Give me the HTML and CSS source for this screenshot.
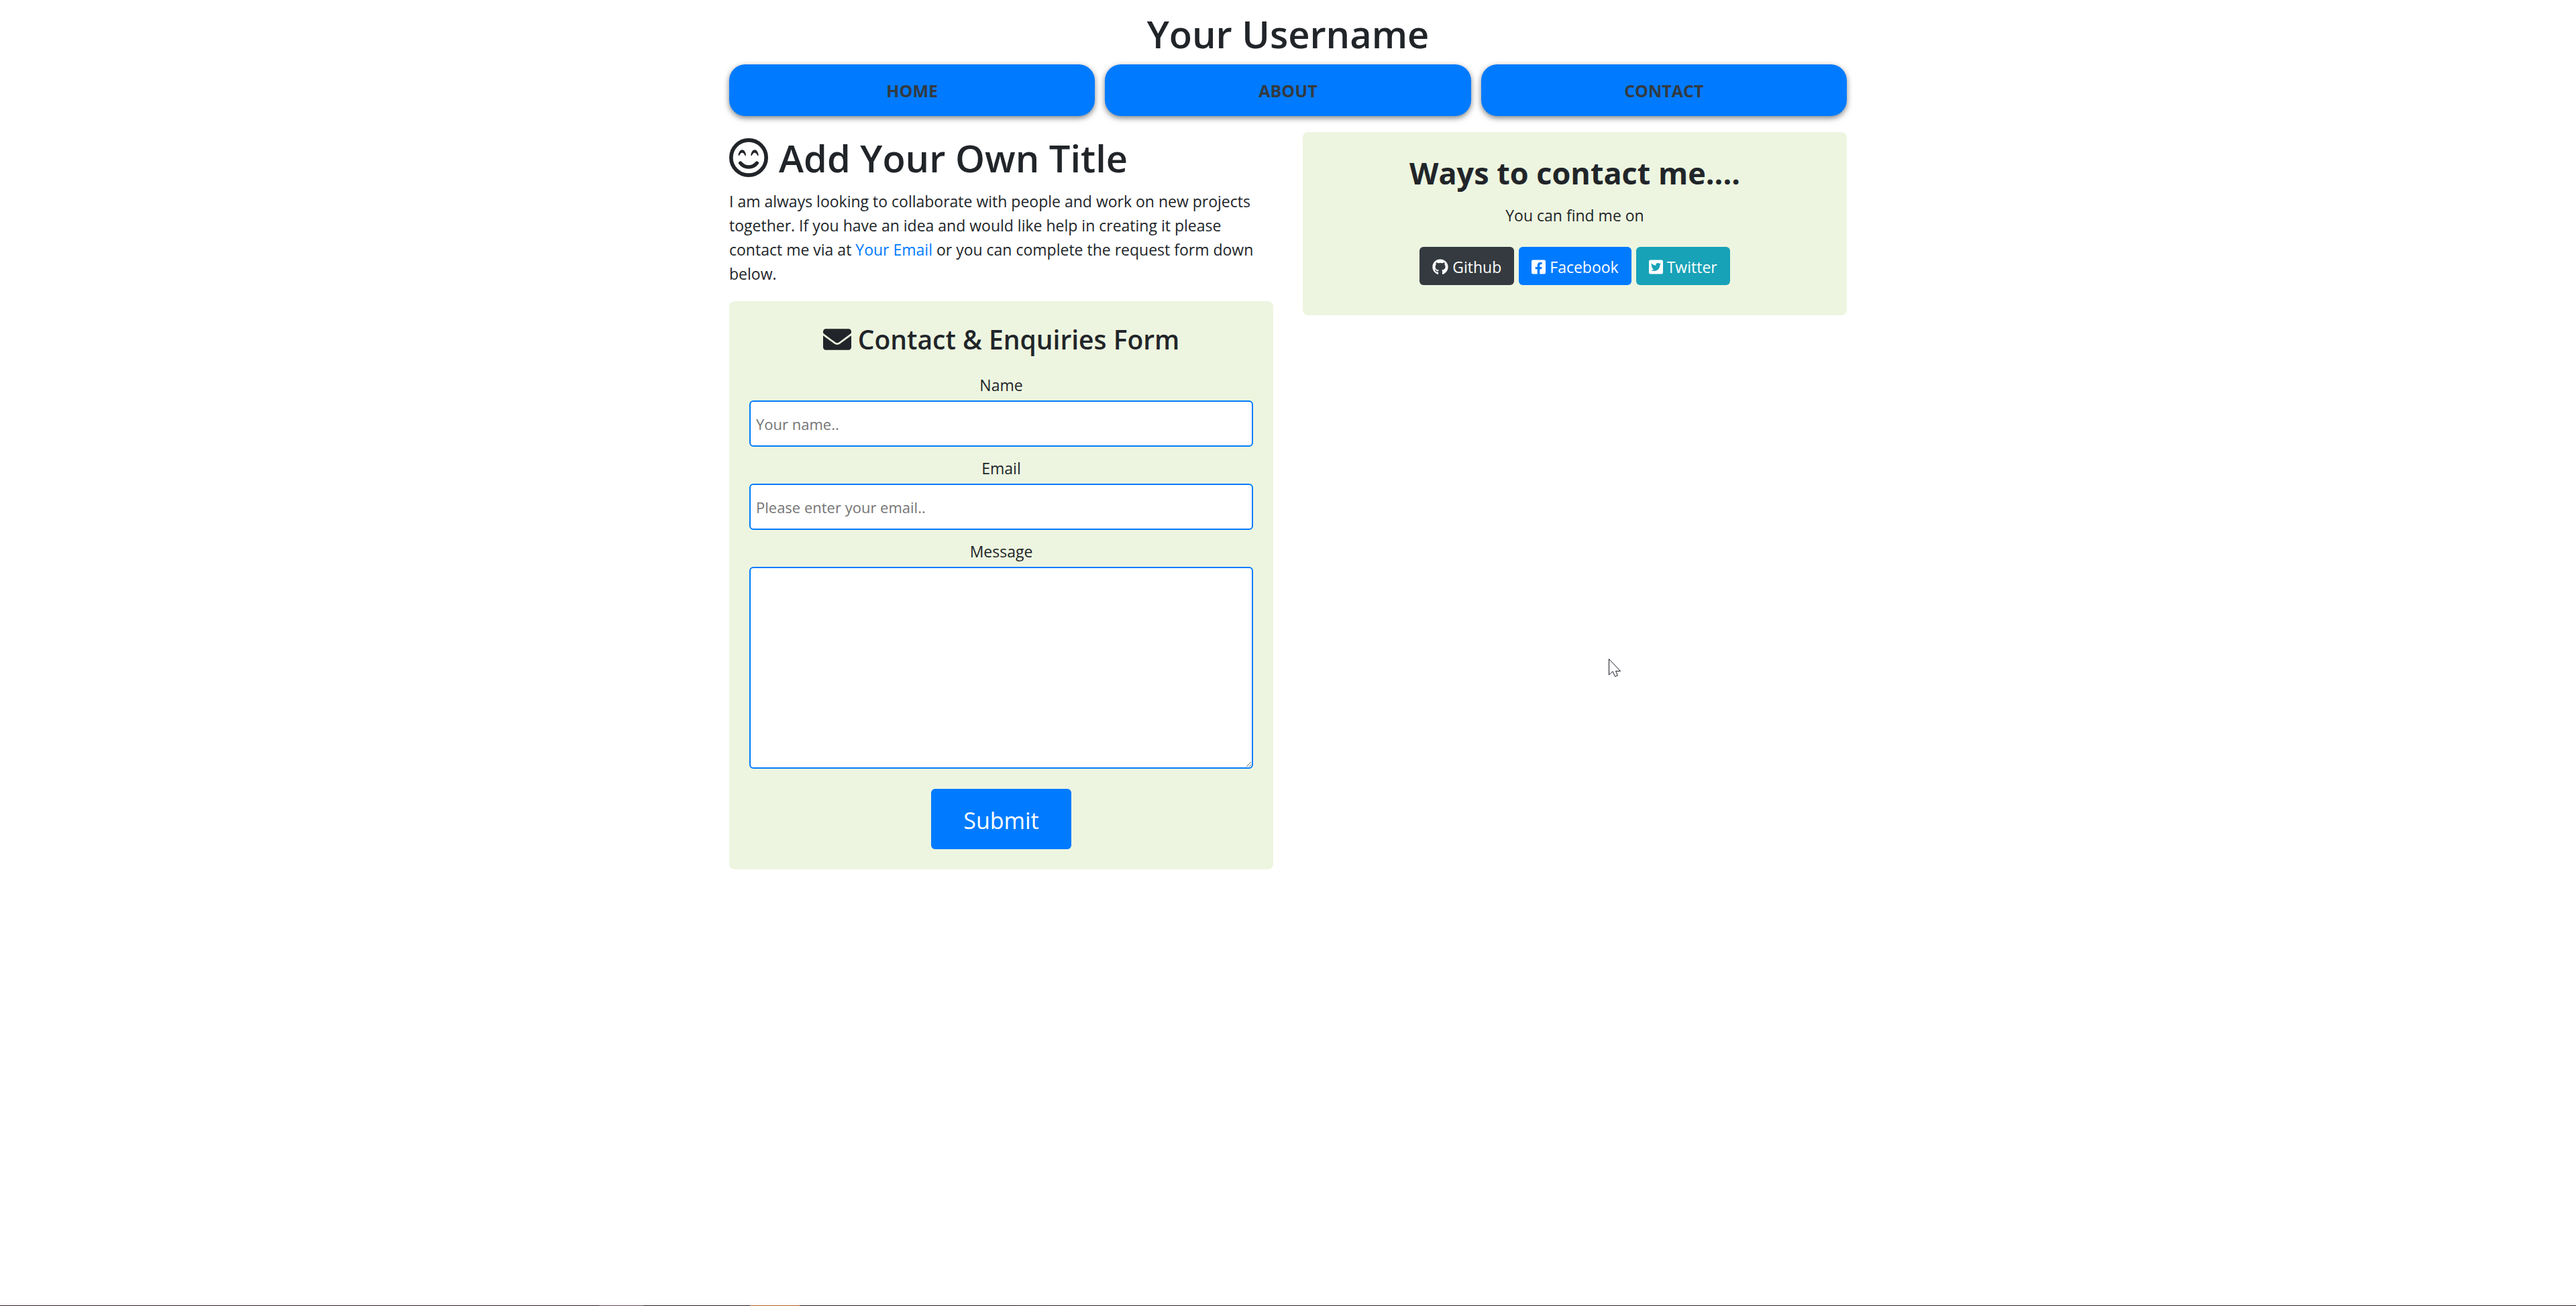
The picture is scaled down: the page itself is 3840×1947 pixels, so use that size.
FILE: index.html
```html
<!DOCTYPE html>
<html lang="en">
<head>
  <meta charset="utf-8">
  <meta name="viewport" content="width=device-width, initial-scale=1">
  <title>Contact</title>
  <link rel="stylesheet" href="styles.css">
</head>
<body>
  <div class="container">
    <header class="site-header">
      <h1 class="title">Your Username</h1>
      <nav class="menu">
        <a class="menu-link" href="#home">HOME</a>
        <a class="menu-link" href="#about">ABOUT</a>
        <a class="menu-link" href="#contact">CONTACT</a>
      </nav>
    </header>

    <main class="columns">
      <section>
        <h1 class="title title-icon">
          <svg class="icon-smile" viewBox="0 0 174 174" aria-hidden="true">
            <circle cx="87" cy="87" r="78.500" fill="none" stroke="currentColor" stroke-width="17"/>
            <path fill="currentColor" d="M41 76C42 62 50 52 58 52S74 62 75 76Q74 80 71 78Q65 65 58 65Q51 65 45 78Q41 80 41 76Z"/>
            <path fill="currentColor" d="M97 76C98 62 106 52 114 52S130 62 131 76Q130 80 127 78Q121 65 114 65Q107 65 101 78Q97 80 97 76Z"/>
            <path fill="none" stroke="currentColor" stroke-width="16" stroke-linecap="round" d="M50 111C69 135 105 135 124 111"/>
          </svg>
          Add Your Own Title
        </h1>
        <p class="intro">I am always looking to collaborate with people and work on new projects together. If you have an idea and would like help in creating it please contact me via at <a class="link" href="#email">Your Email</a> or you can complete the request form down below.</p>

        <form class="card">
          <h2 class="form-title">
            <svg class="icon-envelope" viewBox="0 0 512 512" aria-hidden="true"><path fill="currentColor" d="M502.3 190.8c3.900-3.100 9.700-.2 9.700 4.700V400c0 26.500-21.500 48-48 48H48c-26.500 0-48-21.500-48-48V195.600c0-5 5.700-7.800 9.700-4.700 22.400 17.400 52.100 39.500 154.100 113.600 21.100 15.400 56.700 47.800 92.200 47.600 35.700.3 72-32.800 92.300-47.600 102-74.100 131.600-96.300 154-113.700zM256 320c23.200.4 56.600-29.200 73.400-41.400 132.700-96.300 142.800-104.700 173.400-128.700 5.800-4.500 9.200-11.500 9.200-18.900v-19c0-26.500-21.500-48-48-48H48c-26.500 0-48 21.500-48 48v19c0 7.400 3.400 14.300 9.200 18.900 30.600 23.900 40.700 32.400 173.400 128.700 16.800 12.200 50.200 41.800 73.400 41.400z"/></svg>
            Contact &amp; Enquiries Form
          </h2>
          <div class="field">
            <label for="name">Name</label>
            <input class="control" id="name" type="text" placeholder="Your name..">
          </div>
          <div class="field">
            <label for="email">Email</label>
            <input class="control" id="email" type="email" placeholder="Please enter your email..">
          </div>
          <div class="field">
            <label for="message">Message</label>
            <textarea class="control control-area" id="message"></textarea>
          </div>
          <button class="submit" type="submit">Submit</button>
        </form>
      </section>

      <aside class="card card-social">
        <h2 class="social-title">Ways to contact me....</h2>
        <p class="social-text">You can find me on</p>
        <div class="social-links">
          <a class="button button-dark" href="#github">
            <svg class="icon-github" viewBox="0 0 496 512" aria-hidden="true"><path fill="currentColor" d="M165.9 397.4c0 2-2.300 3.600-5.200 3.600-3.300.3-5.600-1.300-5.600-3.600 0-2 2.300-3.600 5.200-3.600 3-.3 5.600 1.300 5.600 3.600zm-31.100-4.500c-.7 2 1.300 4.300 4.300 4.900 2.600 1 5.600 0 6.200-2s-1.300-4.300-4.300-5.200c-2.600-.7-5.500.3-6.200 2.300zm44.200-1.700c-2.900.7-4.900 2.600-4.600 4.900.3 2 2.900 3.300 5.900 2.600 2.900-.7 4.900-2.600 4.600-4.600-.3-1.900-3-3.200-5.900-2.900zM244.800 8C106.100 8 0 113.300 0 252c0 110.900 69.800 205.800 169.500 239.200 12.800 2.300 17.300-5.600 17.300-12.100 0-6.200-.3-40.400-.3-61.400 0 0-70 15-84.700-29.800 0 0-11.400-29.100-27.800-36.600 0 0-22.900-15.700 1.600-15.400 0 0 24.900 2 38.600 25.800 21.900 38.600 58.600 27.500 72.900 20.900 2.300-16 8.800-27.100 16-33.700-55.900-6.200-112.300-14.300-112.300-110.500 0-27.500 7.600-41.300 23.600-58.900-2.600-6.500-11.100-33.300 2.600-67.900 20.900-6.500 69 27 69 27 20-5.600 41.500-8.500 62.800-8.500s42.800 2.900 62.800 8.500c0 0 48.100-33.600 69-27 13.700 34.700 5.200 61.400 2.600 67.900 16 17.700 25.800 31.500 25.800 58.900 0 96.500-58.900 104.200-114.800 110.500 9.200 7.900 17 22.900 17 46.400 0 33.700-.3 75.400-.3 83.600 0 6.500 4.600 14.400 17.300 12.100C428.200 457.800 496 362.900 496 252 496 113.300 383.500 8 244.800 8z"/></svg>
            Github
          </a>
          <a class="button button-blue" href="#facebook">
            <svg class="icon-square" viewBox="0 0 448 512" aria-hidden="true"><path fill="currentColor" d="M400 32H48A48 48 0 0 0 0 80v352a48 48 0 0 0 48 48h137.250V327.690h-63V256h63v-54.640c0-62.150 37-96.480 93.670-96.480 27.140 0 55.520 4.840 55.520 4.840v61h-31.270c-30.810 0-40.420 19.120-40.420 38.730V256h68.780l-11 71.690h-57.780V480H400a48 48 0 0 0 48-48V80a48 48 0 0 0-48-48z"/></svg>
            Facebook
          </a>
          <a class="button button-teal" href="#twitter">
            <svg class="icon-square" viewBox="0 0 448 512" aria-hidden="true"><path fill="currentColor" d="M400 32H48C21.500 32 0 53.500 0 80v352c0 26.500 21.500 48 48 48h352c26.500 0 48-21.500 48-48V80c0-26.500-21.500-48-48-48zm-48.900 158.800c.2 2.800.2 5.700.2 8.500 0 86.700-66 186.600-186.600 186.600-37.200 0-71.700-10.800-100.700-29.400 5.300.6 10.400.8 15.800.8 30.700 0 58.900-10.400 81.400-28-28.800-.6-53-19.500-61.300-45.500 10.100 1.500 19.200 1.500 29.600-1.200-30-6.100-52.500-32.500-52.500-64.400v-.8c8.700 4.900 18.900 7.900 29.600 8.300a65.447 65.447 0 0 1-29.200-54.600c0-12.200 3.200-23.400 8.900-33.100 32.300 39.800 80.800 65.800 135.200 68.600-9.300-44.500 24-80.600 64-80.600 18.900 0 35.900 7.900 47.900 20.700 14.800-2.800 29-8.300 41.600-15.800-4.900 15.200-15.200 28-28.800 36.100 13.200-1.400 26-5.100 37.800-10.200-8.900 13.100-20.100 24.700-32.900 34z"/></svg>
            Twitter
          </a>
        </div>
      </aside>
    </main>
  </div>

  <svg class="pointer" viewBox="0 0 18 27" aria-hidden="true"><path fill="#fff" stroke="#1c1c26" stroke-width="1" d="M.5.5V24L6 19L9.500 26.500L13.500 25L10.500 18.500H17.500Z"/></svg>
  <div class="desktop-edge"></div>
</body>
</html>
```
FILE: styles.css
```css
* {
  box-sizing: border-box;
}

body {
  position: relative;
  min-height: 100vh;
  margin: 0;
  background: #fff;
  color: #212529;
  font-family: "Segoe UI", "Open Sans", "Noto Sans", sans-serif;
  font-size: 23px;
  line-height: 36px;
}

h1,
h2,
p {
  margin: 0;
}

a {
  text-decoration: none;
}

svg {
  flex: none;
}

.container {
  max-width: 1710px;
  margin: 0 auto;
  padding: 12px 22px 24px;
}

.title {
  margin-bottom: 8px;
  font-size: 56px;
  font-weight: 600;
  line-height: 76px;
}

.site-header {
  margin-bottom: 24px;
  text-align: center;
}

.menu {
  display: grid;
  grid-template-columns: repeat(3, 1fr);
  gap: 15px;
}

.menu-link {
  padding: 21px 16px 20px;
  border-radius: 24px;
  background: #007bff;
  box-shadow: 0 3px 8px rgba(0, 0, 0, 0.5);
  color: #343a40;
  font-size: 25px;
  font-weight: 700;
}

.columns {
  display: grid;
  grid-template-columns: repeat(2, 1fr);
  align-items: start;
  gap: 44px;
}

.title-icon {
  display: flex;
  align-items: center;
  gap: 16px;
}

.icon-smile {
  width: 58px;
  height: 58px;
}

.intro {
  margin-bottom: 23px;
  padding-top: 1px;
}

.link {
  color: #007bff;
}

.card {
  padding: 30px;
  border-radius: 8px;
  background: #edf5e0;
  text-align: center;
}

.form-title {
  display: flex;
  align-items: center;
  justify-content: center;
  gap: 10px;
  margin-bottom: 24px;
  font-size: 39px;
  font-weight: 600;
  line-height: 53px;
}

.icon-envelope {
  width: 42px;
  height: 42px;
}

.field {
  display: flex;
  flex-direction: column;
  gap: 5px;
  margin-bottom: 14px;
}

.control {
  width: 100%;
  height: 69px;
  padding: 2px 8px;
  border: 2px solid #007bff;
  border-radius: 6px;
  background: #fff;
  color: #212529;
  font-family: inherit;
  font-size: 22px;
}

.control::placeholder {
  color: #757575;
}

.control-area {
  height: 301px;
  margin-bottom: 16px;
  resize: both;
}

.submit {
  display: block;
  margin: 0 auto;
  padding: 20px 48px 16px;
  border: 0;
  border-radius: 6px;
  background: #007bff;
  color: #fff;
  font-family: inherit;
  font-size: 34px;
  line-height: 54px;
}

.card-social {
  padding-bottom: 45px;
}

.social-title {
  margin-bottom: 14px;
  font-size: 45px;
  font-weight: 700;
  line-height: 62px;
}

.social-text {
  margin-bottom: 29px;
}

.social-links {
  display: flex;
  justify-content: center;
  gap: 7px;
}

.button {
  display: flex;
  align-items: center;
  gap: 6px;
  padding: 12px 19px 9px;
  border-radius: 6px;
  color: #fff;
}

.button-dark {
  background: #343a40;
}

.button-blue {
  background: #007bff;
}

.button-teal {
  background: #17a2b8;
}

.icon-github {
  width: 24px;
  height: 24px;
}

.icon-square {
  width: 21px;
  height: 24px;
}

/* Mouse pointer lying over the page */
.pointer {
  position: absolute;
  top: 982px;
  left: calc(50% + 478px);
  width: 18px;
  height: 27px;
  pointer-events: none;
}

/* Sliver of the desktop under the window */
.desktop-edge {
  position: absolute;
  right: 0;
  bottom: 0;
  left: 0;
  height: 1px;
  background: linear-gradient(to right, #3a1c24 893px, #6a4a52 893px 959px, #2a1a26 959px 1118px, #b0632c 1118px 1192px, #2a1a26 1192px 1500px, #3f2226 1600px);
}
```
